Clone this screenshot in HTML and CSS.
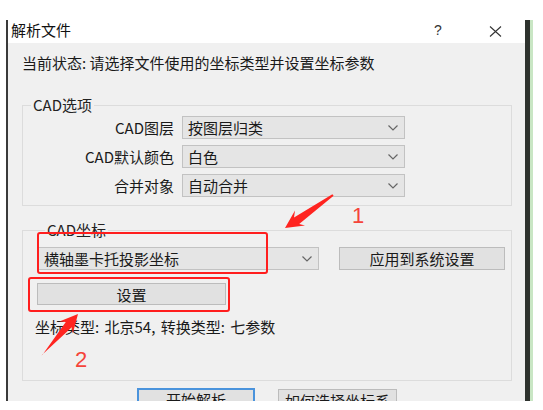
FILE: index.html
```html
<!DOCTYPE html>
<html lang="zh-CN">
<head>
<meta charset="utf-8">
<link rel="stylesheet" href="styles.css">
</head>
<body>
<div class="page">
  <div class="window">
    <div class="titlebar">
      <span class="title">解析文件</span>
      <span class="help">?</span>
      <svg class="close" width="13" height="11" viewBox="0 0 13 11"><path d="M1 0.5 L12 10.5 M12 0.5 L1 10.5" stroke="#333" stroke-width="1.1" fill="none"/></svg>
    </div>
    <div class="body">
      <div class="status">当前状态: 请选择文件使用的坐标类型并设置坐标参数</div>
      <fieldset class="group g1">
        <legend>CAD选项</legend>
        <div class="form">
          <span class="label">CAD图层</span>
          <div class="select"><span>按图层归类</span><svg class="chev" width="10" height="6" viewBox="0 0 10 6"><path d="M0.5 0.5 L5 5 L9.5 0.5" stroke="#666" stroke-width="1.2" fill="none"/></svg></div>
          <span class="label">CAD默认颜色</span>
          <div class="select"><span>白色</span><svg class="chev" width="10" height="6" viewBox="0 0 10 6"><path d="M0.5 0.5 L5 5 L9.5 0.5" stroke="#666" stroke-width="1.2" fill="none"/></svg></div>
          <span class="label">合并对象</span>
          <div class="select"><span>自动合并</span><svg class="chev" width="10" height="6" viewBox="0 0 10 6"><path d="M0.5 0.5 L5 5 L9.5 0.5" stroke="#666" stroke-width="1.2" fill="none"/></svg></div>
        </div>
      </fieldset>
      <fieldset class="group g2">
        <legend>CAD坐标</legend>
        <div class="coord-row">
          <div class="select combo"><span>横轴墨卡托投影坐标</span><svg class="chev" width="10" height="6" viewBox="0 0 10 6"><path d="M0.5 0.5 L5 5 L9.5 0.5" stroke="#666" stroke-width="1.2" fill="none"/></svg></div>
          <div class="btn apply">应用到系统设置</div>
        </div>
        <div class="btn setbtn">设置</div>
        <div class="info">坐标类型: 北京54, 转换类型: 七参数</div>
      </fieldset>
      <div class="actions">
        <div class="btn default">开始解析</div>
        <div class="btn how">如何选择坐标系</div>
      </div>
    </div>
  </div>

  <div class="mark mark1"></div>
  <div class="mark mark2"></div>
  <span class="num num1">1</span>
  <span class="num num2">2</span>
  <svg class="arrows" width="543" height="410" viewBox="0 0 543 410">
    <polygon points="333.6,195.8 299.2,224.0 305.0,225.5 285,228 295.0,210.5 294.0,217.4 332.4,194.2" fill="#ff2420"/>
    <polygon points="41.3,355.6 71.8,327.2 72.8,333.5 78,314 59.4,321.5 65.8,321.9 42.7,354.4" fill="#ff2420"/>
  </svg>
</div>
</body>
</html>
```

FILE: styles.css
```css
* { box-sizing: border-box; }
html, body {
  margin: 0;
  padding: 0;
  background: #fff;
}
body {
  font-family: "Noto Sans CJK SC", "Noto Sans", sans-serif;
  font-size: 15px;
  color: #1a1a1a;
}
.page {
  position: relative;
  width: 543px;
  height: 410px;
  padding-top: 20px;
  overflow: hidden;
}
.window {
  margin-left: 6px;
  width: 524px;
  border-left: 2px solid #3a3a3a;
  border-right: 5px solid #2e322e;
  box-shadow: 3px 0 0 #c9e6c4;
}
.titlebar {
  height: 23px;
  background: #fff;
  display: flex;
  align-items: center;
  padding-left: 3px;
  padding-right: 23px;
  padding-bottom: 3px;
}
.title {
  font-size: 15px;
  line-height: 18px;
  color: #111;
}
.help {
  margin-left: auto;
  width: 10px;
  text-align: center;
  font-family: "Liberation Sans", sans-serif;
  font-size: 14px;
  line-height: 16px;
  color: #333;
  margin-right: 46px;
}
.close {
  display: block;
  margin-top: 2px;
}
.body {
  height: 358px;
  background: #f0f0f0;
  padding: 10px 13px 0 14px;
  overflow: hidden;
}
.status {
  line-height: 20px;
  height: 20px;
  white-space: nowrap;
}
.group {
  margin: 0;
  border: 1px solid #dcdcdc;
  padding: 0;
  min-width: 0;
}
.group legend {
  margin-left: 8px;
  padding: 0 2px;
  line-height: 18px;
  font-size: 15px;
  color: #222;
}
.g1 {
  margin-top: 23px;
  padding: 2px 0 8px 0;
}
.form {
  display: grid;
  grid-template-columns: 151px 223px;
  column-gap: 8px;
  row-gap: 6px;
  align-items: center;
}
.label {
  text-align: right;
  line-height: 23px;
  white-space: nowrap;
}
.select {
  height: 23px;
  background: #e5e5e5;
  border: 1px solid #c2c2c2;
  display: flex;
  align-items: center;
  justify-content: space-between;
  padding: 0 6px 0 5px;
  line-height: 21px;
  white-space: nowrap;
}
.chev { display: block; }
.g2 {
  margin-top: 15px;
  padding: 8px 0 43px 14px;
}
.coord-row {
  display: flex;
  gap: 20px;
}
.combo {
  width: 282px;
  padding-left: 6px;
}
.btn {
  height: 23px;
  background: #e1e1e1;
  border: 1px solid #bcbcbc;
  display: flex;
  align-items: center;
  justify-content: center;
  line-height: 21px;
  white-space: nowrap;
}
.apply {
  width: 166px;
}
.setbtn {
  margin-top: 13px;
  width: 189px;
  height: 22px;
}
.info {
  margin-top: 12px;
  margin-left: -2px;
  line-height: 20px;
  white-space: nowrap;
  word-spacing: 2px;
}
.actions {
  display: flex;
  gap: 23px;
  margin-top: 7px;
  padding-left: 115px;
}
.default {
  width: 118px;
  border: 2px solid #4a93dc;
}
.how {
  width: 119px;
  margin-top: 1px;
}
.mark {
  position: absolute;
  border: 2.5px solid #ff1e1e;
  border-radius: 3px;
}
.mark1 {
  left: 37px;
  top: 232px;
  width: 231px;
  height: 42px;
}
.mark2 {
  left: 28px;
  top: 277px;
  width: 202px;
  height: 35px;
}
.num {
  position: absolute;
  font-family: "Liberation Sans", sans-serif;
  font-size: 22px;
  line-height: 22px;
  color: #f5443a;
}
.num1 { left: 352px; top: 205px; }
.num2 { left: 75px; top: 349px; }
.arrows {
  position: absolute;
  left: 0;
  top: 0;
}
```
